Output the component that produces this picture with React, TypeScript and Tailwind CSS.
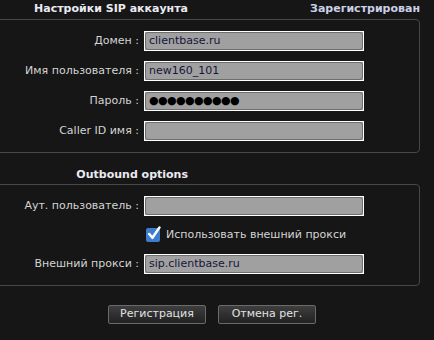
const font = "font-['DejaVu_Sans',sans-serif]";

function Field({ label, value, password }: { label: string; value?: string; password?: boolean }) {
  return (
    <div className="flex items-center">
      <div className="w-[143px] shrink-0 pr-[5px] text-right text-[11px] text-[#d4d4d4]">{label} :</div>
      <div className="h-[20px] w-[220px] border border-white bg-[#a0a0a0]">
        <div className="flex h-full items-center rounded-[3px] border border-[#6e6e6e] px-[3px] text-[11px] text-[#16163a]">
          {password ? <span className="text-[11px] tracking-[-0.6px] text-black">●●●●●●●●●●</span> : value}
        </div>
      </div>
    </div>
  );
}

function Box({ children }: { children: React.ReactNode }) {
  return (
    <div className="-ml-[4px] w-[424px] rounded-[4px] border border-[#474747] py-[11px] pl-[4px]">
      <div className="flex flex-col gap-[10px]">{children}</div>
    </div>
  );
}

export default function App() {
  return (
    <div className={`h-[340px] w-[434px] overflow-hidden bg-[#161616] ${font}`}>
      <div className="flex h-[19px] items-center">
        <div className="w-[188px] text-right text-[11px] font-bold text-[#eaeaf2]">Настройки SIP аккаунта</div>
        <div className="w-[232px] text-right text-[11px] font-bold text-[#cad0e6]">Зарегистрирован</div>
      </div>
      <Box>
        <Field label="Домен" value="clientbase.ru" />
        <Field label="Имя пользователя" value="new160_101" />
        <Field label="Пароль" password />
        <Field label="Caller ID имя" value="" />
      </Box>
      <div className="flex h-[31px] items-end pb-[1px]">
        <div className="w-[188px] text-right text-[11px] font-bold text-[#eaeaf2]">Outbound options</div>
      </div>
      <Box>
        <Field label="Аут. пользователь" value="" />
        <div className="flex h-[18px] items-center pl-[145px]">
          <div className="relative flex h-[14px] w-[14px] items-center justify-center rounded-[2px] bg-[#3c7dd0]">
            <svg viewBox="0 0 14 14" className="absolute -top-[2px] left-0 h-[15px] w-[15px]">
              <path d="M3 7.5 L6 11 L12.5 1.5" fill="none" stroke="white" strokeWidth="2.4" strokeLinecap="round" strokeLinejoin="round" />
            </svg>
          </div>
          <span className="ml-[6px] text-[11px] text-[#d4d4d4]">Использовать внешний прокси</span>
        </div>
        <Field label="Внешний прокси" value="sip.clientbase.ru" />
      </Box>
      <div className="mt-[19px] flex gap-[12px] pl-[108px]">
        <button className="h-[19px] w-[98px] rounded-[2px] border border-[#6a6a6a] bg-gradient-to-b from-[#3e3e3e] to-[#222] text-[11px] text-[#e2e2e2]">Регистрация</button>
        <button className="h-[19px] w-[98px] rounded-[2px] border border-[#6a6a6a] bg-gradient-to-b from-[#3e3e3e] to-[#222] text-[11px] text-[#e2e2e2]">Отмена рег.</button>
      </div>
    </div>
  );
}
